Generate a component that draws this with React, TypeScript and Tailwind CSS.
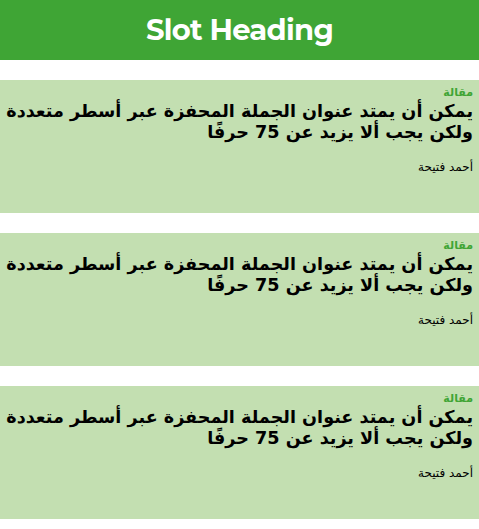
import React from "react";

const items = [1, 2, 3];

export default function App() {
  return (
    <main className="min-h-screen bg-white font-['DejaVu_Sans',sans-serif]">
      {/* header */}
      <header className="h-[60px] bg-[#3fa535] flex items-center justify-center">
        <h1 className="text-white text-[29px] font-bold font-['Montserrat','Lato',sans-serif] tracking-tight">
          Slot Heading
        </h1>
      </header>

      <div className="pt-5 flex flex-col gap-5">
        {items.map((i) => (
          <article
            key={i}
            dir="rtl"
            className="h-[133px] bg-[#c3dfb1] pr-[6px] pl-0 pt-[5px] text-right"
          >
            <span className="block text-[11px] font-bold text-[#3fa535] leading-4">
              مقالة
            </span>
            <h2 className="text-[17.6px] font-bold text-black leading-[21px]">
              يمكن أن يمتد عنوان الجملة المحفزة عبر أسطر متعددة ولكن يجب ألا يزيد عن 75 حرفًا
            </h2>
            <p className="mt-[16px] text-[12px] text-black leading-4">أحمد فتيحة</p>
          </article>
        ))}
      </div>
    </main>
  );
}
